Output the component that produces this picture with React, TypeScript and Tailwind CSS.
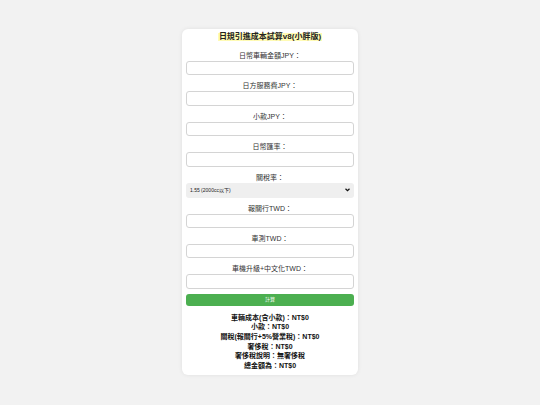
import React from "react";

const font = { fontFamily: '"Liberation Sans", "Noto Sans CJK TC", Arial, sans-serif' };

const fields = [
  "日幣車輛金額JPY：",
  "日方服務費JPY：",
  "小款JPY：",
  "日幣匯率：",
];

const fields2 = ["報關行TWD：", "車測TWD：", "車機升級+中文化TWD："];

function Field({ label }: { label: string }) {
  return (
    <div className="flex flex-col">
      <label className="mt-[6px] mb-[1px] text-center text-[7px] leading-[9px] text-[#333]">{label}</label>
      <input className="h-[14.4px] w-full rounded-[3px] border border-[#d4d4d4] bg-white outline-none" />
    </div>
  );
}

export default function App() {
  return (
    <div className="flex min-h-[405px] w-full justify-center bg-[#f2f2f2] pt-[29px]" style={font}>
      <div className="h-[346px] w-[176px] rounded-[6px] bg-white px-[4px] pt-[4px] shadow-[0_0_4px_rgba(0,0,0,0.08)]">
        <div className="flex justify-center">
          <h1 className="bg-[#fffbb4] px-[1px] text-[8px] font-bold leading-[8px] text-[#222]">
            日規引進成本試算v8(小胖版)
          </h1>
        </div>
        <div className="mt-[4px]">
          {fields.map((f) => (
            <Field key={f} label={f} />
          ))}
          <div className="flex flex-col">
            <label className="mt-[6px] mb-[1px] text-center text-[7px] leading-[9px] text-[#333]">關稅率：</label>
            <div className="relative h-[15px] w-full rounded-[3px] bg-[#efefef]">
              <span className="absolute left-[4px] top-[4px] text-[5px] leading-[7px] text-[#222]">1.55 (2000cc以下)</span>
              <svg className="absolute right-[4px] top-[5px]" width="5" height="4" viewBox="0 0 10 8">
                <path d="M1 1.5 L5 5.5 L9 1.5" stroke="#111" strokeWidth="2.4" fill="none" />
              </svg>
            </div>
          </div>
          {fields2.map((f) => (
            <Field key={f} label={f} />
          ))}
        </div>
        <button className="mt-[5px] flex h-[12px] w-full items-center justify-center rounded-[3px] bg-[#4caf50] text-[5px] text-white">
          計算
        </button>
        <div className="mt-[7px] flex flex-col items-center text-[7px] font-bold leading-[9.6px] text-[#111]">
          <p>車輛成本(含小款)：NT$0</p>
          <p>小款：NT$0</p>
          <p>關稅(報關行+5%營業稅)：NT$0</p>
          <p>奢侈稅：NT$0</p>
          <p>奢侈稅說明：無奢侈稅</p>
          <p>總金額為：NT$0</p>
        </div>
      </div>
    </div>
  );
}
